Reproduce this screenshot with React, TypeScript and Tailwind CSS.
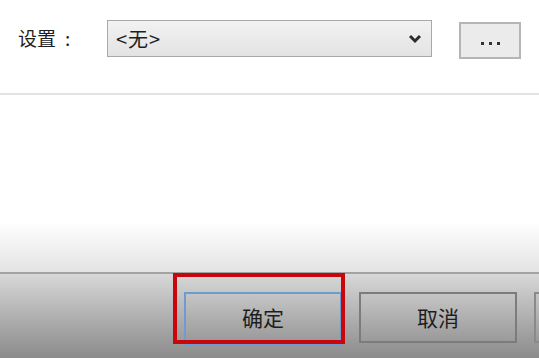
import React from "react";

const FONT = { fontFamily: '"Noto Sans CJK SC", "Liberation Sans", sans-serif' };

function Chevron() {
  return (
    <svg width="12" height="10" viewBox="0 0 12 10" className="text-[#2b2b2b]">
      <path d="M1 2 L6 7 L11 2" fill="none" stroke="currentColor" strokeWidth="3" strokeLinejoin="miter" />
    </svg>
  );
}

export default function App() {
  return (
    <div className="w-[539px] h-[358px] flex flex-col bg-white overflow-hidden relative text-[#1e1e1e]" style={FONT}>
      {/* settings row */}
      <div className="h-[93px] flex items-start pt-[20px] pl-[18px]">
        <div className="h-[37px] w-[89px] shrink-0 flex items-center text-[19px]">
          <span>设置</span>
          <span className="ml-[9px]">:</span>
        </div>
        <div className="h-[37px] w-[325px] shrink-0 flex items-center justify-between border border-[#a9a9a9] bg-gradient-to-b from-[#f2f2f2] to-[#e3e3e3] pl-[8px] pr-[10px]">
          <span className="text-[20px] tracking-[1px]">&lt;无&gt;</span>
          <Chevron />
        </div>
        <div className="ml-[27px] mt-[2px] h-[37px] w-[62px] shrink-0 flex items-center justify-center gap-[5px] pt-[6px] border-2 border-[#b5b5b5] bg-[#ebebeb]">
          <span className="w-[3px] h-[3px] bg-[#333]" />
          <span className="w-[3px] h-[3px] bg-[#333]" />
          <span className="w-[3px] h-[3px] bg-[#333]" />
        </div>
      </div>
      <div className="h-[2px] bg-[#e2e2e2]" />

      {/* empty area */}
      <div className="flex-1 bg-gradient-to-b from-white from-[72%] to-[#e3e3e3]" />

      {/* button bar */}
      <div className="h-[86px] border-t-2 border-[#a3a3a3] bg-gradient-to-b from-[#d8d8d8] to-[#8b8b8b] flex items-start pt-[18px] pl-[184px] gap-[17px]">
        <div className="h-[54px] w-[158px] shrink-0 flex items-center justify-center pb-[2px] border-2 border-[#6f9bd3] text-[21px]">确定</div>
        <div className="h-[51px] w-[158px] shrink-0 flex items-center justify-center border-2 border-[#7c7c7c] text-[21px]">取消</div>
        <div className="h-[51px] w-[40px] shrink-0 border-2 border-[#8a8a8a]" />
      </div>

      {/* red highlight annotation */}
      <div className="absolute left-[173px] top-[273px] w-[172px] h-[71px] border-4 border-[#c8070d]" />
    </div>
  );
}
